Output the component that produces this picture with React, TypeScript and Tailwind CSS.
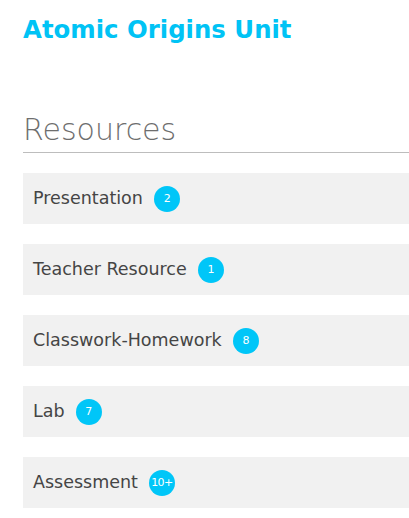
const resources = [
  { name: "Presentation", count: "2" },
  { name: "Teacher Resource", count: "1" },
  { name: "Classwork-Homework", count: "8" },
  { name: "Lab", count: "7" },
  { name: "Assessment", count: "10+" },
];

function ResourceRow({ name, count }: { name: string; count: string }) {
  return (
    <div className="flex h-[51px] items-center bg-[#f1f1f1] pl-[10px]">
      <span className="text-[17.5px] text-[#454545]">{name}</span>
      <span className="ml-[11px] flex h-[26px] w-[26px] items-center justify-center rounded-full bg-[#00c6f8] pt-[1px] text-[11px] tracking-[-0.5px] text-white">
        {count}
      </span>
    </div>
  );
}

export default function App() {
  return (
    <div className="min-h-screen bg-white pl-[23px] pt-[16px] font-['DejaVu_Sans',sans-serif]">
      <h1 className="text-[24.4px] leading-[28px] font-bold text-[#00c3f5]">
        Atomic Origins Unit
      </h1>

      <h2 className="mt-[68px] border-b border-[#bdbdbd] pb-[4px] text-[30px] leading-[36px] font-extralight text-[#6e6e6e]">
        Resources
      </h2>

      <div className="mt-[20px] flex flex-col gap-[20px]">
        {resources.map((r) => (
          <ResourceRow key={r.name} name={r.name} count={r.count} />
        ))}
      </div>
    </div>
  );
}
